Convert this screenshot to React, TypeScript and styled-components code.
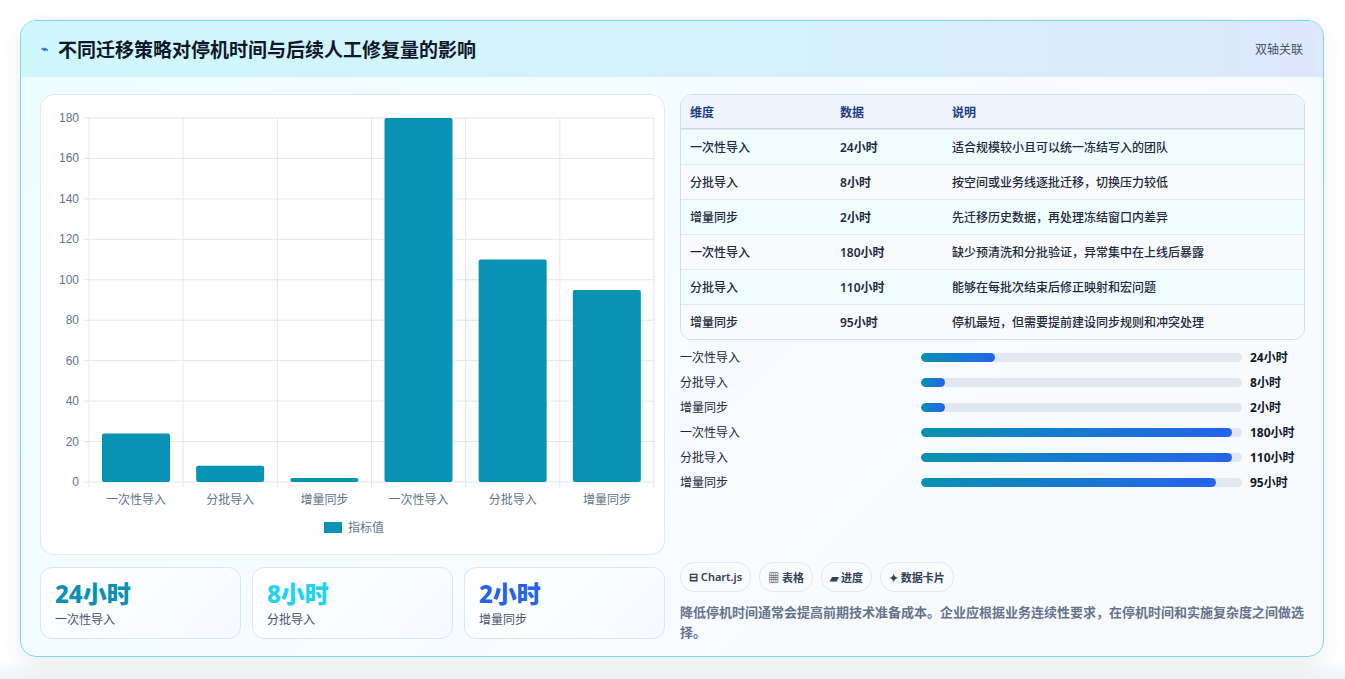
import styled, { createGlobalStyle } from 'styled-components'

const Global = createGlobalStyle`
  body { margin: 0; background: #f1f5f9; font-family: 'Noto Sans', 'Noto Sans CJK SC', sans-serif; }
`

const Page = styled.div`
  width: 1345px;
  height: 679px;
  background: linear-gradient(#ffffff 0, #ffffff 660px, #eef2f6 680px);
  padding: 20px;
  box-sizing: border-box;
`

const Card = styled.div`
  width: 1304px;
  height: 637px;
  box-sizing: border-box;
  border: 1px solid #7dd8ea;
  border-radius: 16px;
  overflow: hidden;
  background: linear-gradient(135deg, #ecfeff 0%, #f8fbff 60%, #f8fafc 100%);
  box-shadow: 0 8px 24px rgba(15, 23, 42, 0.08);
`

const Header = styled.div`
  height: 55px;
  display: flex;
  align-items: center;
  justify-content: space-between;
  padding: 0 20px;
  background: linear-gradient(90deg, #cff7fd 0%, #d6f1fb 60%, #dde7fd 100%);
  border-bottom: 1px solid #d6eef5;
`

const Title = styled.h1`
  margin: 0;
  font-size: 19px;
  font-weight: 700;
  color: #0f172a;
  display: flex;
  align-items: center;
  gap: 10px;
`

const Badge = styled.span`
  font-size: 12px;
  color: #475569;
`

const Body = styled.div`
  display: grid;
  grid-template-columns: 625px 625px;
  gap: 15px;
  padding: 17px 19px;
`

const Col = styled.div`
  display: flex;
  flex-direction: column;
`

const ChartPanel = styled.div`
  height: 461px;
  box-sizing: border-box;
  background: #fff;
  border: 1px solid #e2e8f0;
  border-radius: 14px;
  position: relative;
`

const Stats = styled.div`
  margin-top: 12px;
  display: grid;
  grid-template-columns: repeat(3, 1fr);
  gap: 11px;
`

const Stat = styled.div`
  height: 72px;
  box-sizing: border-box;
  border: 1px solid #dbe7f0;
  border-radius: 12px;
  background: linear-gradient(135deg, #ffffff, #f5f9ff);
  padding: 10px 14px;
`

const StatValue = styled.div<{ $c: string }>`
  font-size: 24px;
  font-weight: 800;
  color: ${p => p.$c};
  line-height: 32px;
`

const StatLabel = styled.div`
  font-size: 12px;
  color: #475569;
`

const Table = styled.table`
  width: 100%;
  border-collapse: separate;
  border-spacing: 0;
  border: 1px solid #cfdfea;
  border-radius: 12px;
  overflow: hidden;
  font-size: 12px;
  background: #fff;
`

const Th = styled.th`
  text-align: left;
  font-weight: 700;
  color: #1e3a8a;
  background: #eef5ff;
  height: 33px;
  padding: 0 9px;
  border-bottom: 1px solid #cbd5e1;
`

const Tr = styled.tr<{ $odd: boolean }>`
  background: ${p => (p.$odd ? '#f0fdff' : '#f8fafc')};
`

const Td = styled.td<{ $w?: boolean }>`
  height: 34px;
  padding: 0 9px;
  color: #1e293b;
  font-weight: ${p => (p.$w ? 600 : 500)};
  border-top: 1px solid #e2e8f0;
`

const Bars = styled.div`
  margin-top: 8px;
  display: flex;
  flex-direction: column;
  gap: 8px;
`

const BarRow = styled.div`
  display: grid;
  grid-template-columns: 233px 321px 1fr;
  gap: 8px;
  align-items: center;
  font-size: 12px;
  height: 17px;
  color: #1e293b;
`

const Track = styled.div`
  height: 9px;
  border-radius: 5px;
  background: #e2e8f0;
  overflow: hidden;
`

const Fill = styled.div`
  height: 100%;
  border-radius: 5px;
  background: linear-gradient(90deg, #0891b2, #2563eb);
`

const Val = styled.span`
  font-weight: 700;
  color: #0f172a;
`

const Tags = styled.div`
  margin-top: 72px;
  display: flex;
  gap: 8px;
`

const Tag = styled.span`
  font-size: 11px;
  font-weight: 600;
  color: #334155;
  border: 1px solid #e2e8f0;
  background: #f8fafc;
  border-radius: 14px;
  padding: 6px 8px;
`

const Note = styled.p`
  margin: 10px 0 0;
  font-size: 13px;
  font-weight: 600;
  color: #64748b;
  line-height: 20px;
`

const cats = ['一次性导入', '分批导入', '增量同步', '一次性导入', '分批导入', '增量同步']
const vals = [24, 8, 2, 180, 110, 95]
const notes = [
  '适合规模较小且可以统一冻结写入的团队',
  '按空间或业务线逐批迁移，切换压力较低',
  '先迁移历史数据，再处理冻结窗口内差异',
  '缺少预清洗和分批验证，异常集中在上线后暴露',
  '能够在每批次结束后修正映射和宏问题',
  '停机最短，但需要提前建设同步规则和冲突处理',
]
const widths = [23, 7.5, 7.5, 97, 97, 92]

function Chart() {
  const x0 = 48, x1 = 613, y0 = 23, y1 = 387
  const cw = (x1 - x0) / 6
  const ticks = [0, 20, 40, 60, 80, 100, 120, 140, 160, 180]
  return (
    <svg width="625" height="461" style={{ display: 'block' }}>
      {ticks.map(t => {
        const y = y1 - (t / 180) * (y1 - y0)
        return (
          <g key={t}>
            <line x1={x0 - 5} x2={x1} y1={y} y2={y} stroke="#e5e7eb" />
            <text x={x0 - 10} y={y + 4} fontSize="12" fill="#64748b" textAnchor="end" fontFamily="Liberation Sans, sans-serif">{t}</text>
          </g>
        )
      })}
      {[0, 1, 2, 3, 4, 5, 6].map(i => (
        <line key={i} x1={x0 + i * cw} x2={x0 + i * cw} y1={y0} y2={y1 + 5} stroke="#e5e7eb" />
      ))}
      {vals.map((v, i) => {
        const h = (v / 180) * (y1 - y0)
        return <rect key={i} x={x0 + i * cw + 13} y={y1 - h} width={68} height={h} rx="2" fill="#0893b4" />
      })}
      {cats.map((c, i) => (
        <text key={i} x={x0 + i * cw + cw / 2} y={409} fontSize="12" fill="#64748b" textAnchor="middle">{c}</text>
      ))}
      <rect x="283" y="427" width="18" height="11" fill="#0893b4" />
      <text x="307" y="437" fontSize="12" fill="#64748b">指标值</text>
    </svg>
  )
}

export default function App() {
  return (
    <Page>
      <Global />
      <Card>
        <Header>
          <Title><span style={{ color: '#2563eb', fontSize: 12 }}>⌁</span>不同迁移策略对停机时间与后续人工修复量的影响</Title>
          <Badge>双轴关联</Badge>
        </Header>
        <Body>
          <Col>
            <ChartPanel><Chart /></ChartPanel>
            <Stats>
              <Stat><StatValue $c="#0891b2">24小时</StatValue><StatLabel>一次性导入</StatLabel></Stat>
              <Stat><StatValue $c="#22d3ee">8小时</StatValue><StatLabel>分批导入</StatLabel></Stat>
              <Stat><StatValue $c="#2563eb">2小时</StatValue><StatLabel>增量同步</StatLabel></Stat>
            </Stats>
          </Col>
          <Col>
            <Table>
              <thead>
                <tr><Th style={{ width: 132 }}>维度</Th><Th style={{ width: 94 }}>数据</Th><Th>说明</Th></tr>
              </thead>
              <tbody>
                {cats.map((c, i) => (
                  <Tr key={i} $odd={i % 2 === 0}>
                    <Td>{c}</Td><Td $w>{vals[i]}小时</Td><Td>{notes[i]}</Td>
                  </Tr>
                ))}
              </tbody>
            </Table>
            <Bars>
              {cats.map((c, i) => (
                <BarRow key={i}>
                  <span>{c}</span>
                  <Track><Fill style={{ width: `${widths[i]}%` }} /></Track>
                  <Val>{vals[i]}小时</Val>
                </BarRow>
              ))}
            </Bars>
            <Tags>
              <Tag>⊟ Chart.js</Tag>
              <Tag>▦ 表格</Tag>
              <Tag>▰ 进度</Tag>
              <Tag>✦ 数据卡片</Tag>
            </Tags>
            <Note>降低停机时间通常会提高前期技术准备成本。企业应根据业务连续性要求，在停机时间和实施复杂度之间做选择。</Note>
          </Col>
        </Body>
      </Card>
    </Page>
  )
}
